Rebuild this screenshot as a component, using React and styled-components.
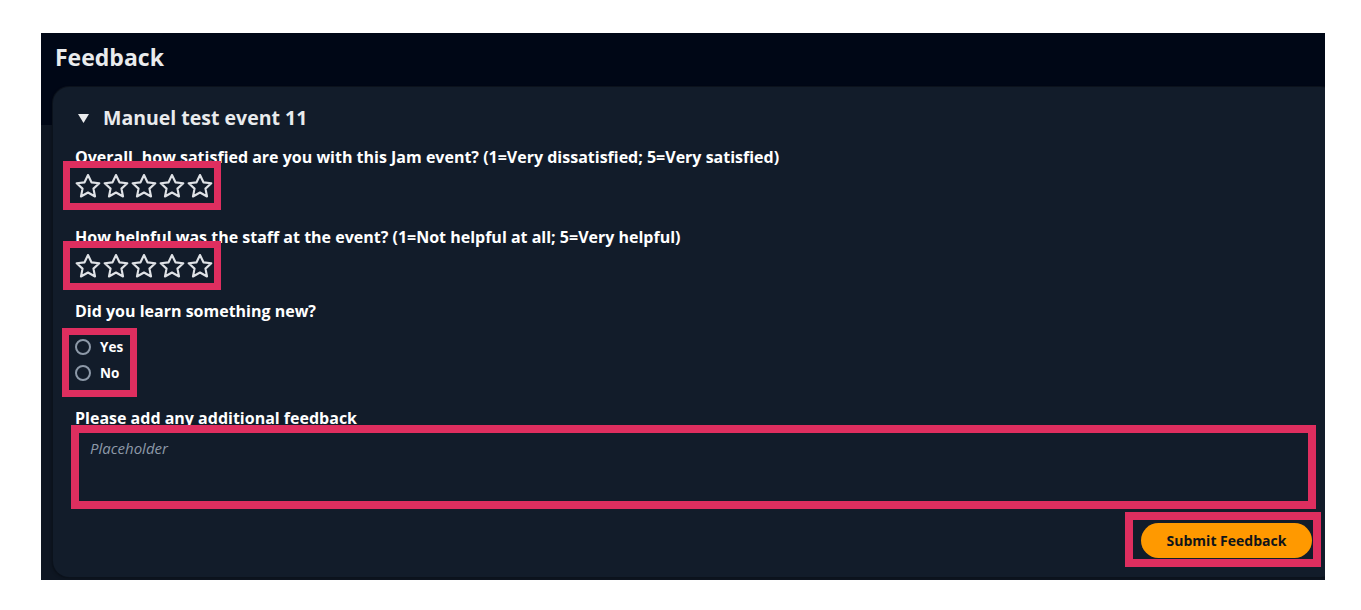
import React from 'react'
import styled, { createGlobalStyle } from "styled-components";

const GlobalStyle = createGlobalStyle`
    body {
    margin: 0;
    background: #ffffff;
    font-family: "Open Sans", "Noto Sans", sans-serif;
    }
`

const Page = styled.div`
    padding: 33px 0 30px 41px;
`

const Frame = styled.div`
    width: 1284px;
    height: 547px;
    overflow: hidden;
    background: linear-gradient(to bottom, #000716 0px, #000716 92px, #0e1622 92px);
`

const Title = styled.h1`
    margin: 0;
    padding: 10px 0 0 14px;
    color: #e9ebed;
    font-size: 23px;
    line-height: 28px;
    font-weight: 700;
`

const Card = styled.section`
    margin: 16px -12px 0 12px;
    padding: 19px 25px 19px 22px;
    border-radius: 16px;
    background: #121c2a;
    box-shadow: 0 0 0 1px #0b121c, -1px 1px 3px rgba(0, 0, 0, 0.35);
`

const EventHeader = styled.div`
    display: flex;
    align-items: center;
    gap: 14px;
    padding-left: 3px;
    color: #e9ebed;
    font-size: 19.5px;
    line-height: 24px;
    font-weight: 700;
`

const Field = styled.div`
    margin-top: ${p => p.$top}px;
`

const Label = styled.div`
    color: #ffffff;
    font-size: 16px;
    line-height: 20px;
    font-weight: 700;
    white-space: nowrap;
`

// red annotation boxes drawn over the form controls
const Highlight = styled.div`
    display: inline-flex;
    flex-direction: ${p => (p.$column ? "column" : "row")};
    position: relative;
    padding: ${p => p.$pad};
    margin: ${p => p.$margin};
    outline: ${p => p.$width || 7}px solid #de2e5f;
`

const Stars = styled.div`
    display: flex;
    gap: 2px;
`

const RadioRow = styled.label`
    display: flex;
    align-items: center;
    gap: 9px;
    height: 24px;
    color: #ffffff;
    font-size: 13.5px;
    font-weight: 700;
    & + & {
    margin-top: 2px;
    }
`

const RadioCircle = styled.span`
    width: 12px;
    height: 12px;
    border: 2px solid #8d99a8;
    border-radius: 50%;
`

const TextArea = styled.textarea`
    display: block;
    box-sizing: border-box;
    width: calc(100% - 8px);
    height: 68px;
    margin: 5px 0 0 4px;
    padding: 5px 11px;
    border: none;
    outline: 8px solid #de2e5f;
    resize: none;
    background: #121c2a;
    color: #ffffff;
    font-family: "Open Sans", "Noto Sans", sans-serif;
    font-size: 15px;
    line-height: 20px;
    &::placeholder {
    color: #8d99a8;
    font-style: italic;
    }
`

const Actions = styled.div`
    display: flex;
    justify-content: flex-end;
    margin-top: 22px;
`

const SubmitButton = styled.button`
    width: 171px;
    height: 35px;
    border: none;
    border-radius: 18px;
    background: #ff9900;
    color: #0f141a;
    font-family: "Open Sans", "Noto Sans", sans-serif;
    font-size: 14px;
    font-weight: 700;
`

const Star = () => (
    <svg width="26" height="24" viewBox="1.5 1.6 21 20.2">
        <polygon
            points="12,2.5 14.9,8.6 21.5,9.4 16.6,13.9 17.9,20.5 12,17.2 6.1,20.5 7.4,13.9 2.5,9.4 9.1,8.6"
            fill="none"
            stroke="#dfe2e6"
            strokeWidth="1.8"
            strokeLinejoin="round"
        />
    </svg>
)

const Caret = () => (
    <svg width="11" height="9" viewBox="0 0 11 9">
        <polygon points="0,0 11,0 5.5,9" fill="#e9ebed" />
    </svg>
)

const StarRating = () => (
    <Highlight $pad="6px 1px 5px 5px" $margin="1px 0 0 -5px">
        <Stars>
            {[1, 2, 3, 4, 5].map(n => <Star key={n} />)}
        </Stars>
    </Highlight>
)

export default () => {
    return (
        <Page>
            <GlobalStyle />
            <Frame>
                <Title>Feedback</Title>
                <Card>
                    <EventHeader>
                        <Caret />
                        Manuel test event 11
                    </EventHeader>

                    <Field $top={17}>
                        <Label>Overall, how satisfied are you with this Jam event? (1=Very dissatisfied; 5=Very satisfied)</Label>
                        <StarRating />
                    </Field>

                    <Field $top={24}>
                        <Label>How helpful was the staff at the event? (1=Not helpful at all; 5=Very helpful)</Label>
                        <StarRating />
                    </Field>

                    <Field $top={18}>
                        <Label>Did you learn something new?</Label>
                        <Highlight $column $pad="0 7px 5px 6px" $margin="14px 0 0 -6px">
                            <RadioRow><RadioCircle />Yes</RadioRow>
                            <RadioRow><RadioCircle />No</RadioRow>
                        </Highlight>
                    </Field>

                    <Field $top={18}>
                        <Label>Please add any additional feedback</Label>
                        <TextArea placeholder="Placeholder" />
                    </Field>

                    <Actions>
                        <Highlight $pad="3px 1px 1px 8px" $margin="-3px -1px -1px 0" $width={8}>
                            <SubmitButton>Submit Feedback</SubmitButton>
                        </Highlight>
                    </Actions>
                </Card>
            </Frame>
        </Page>
    )
}
